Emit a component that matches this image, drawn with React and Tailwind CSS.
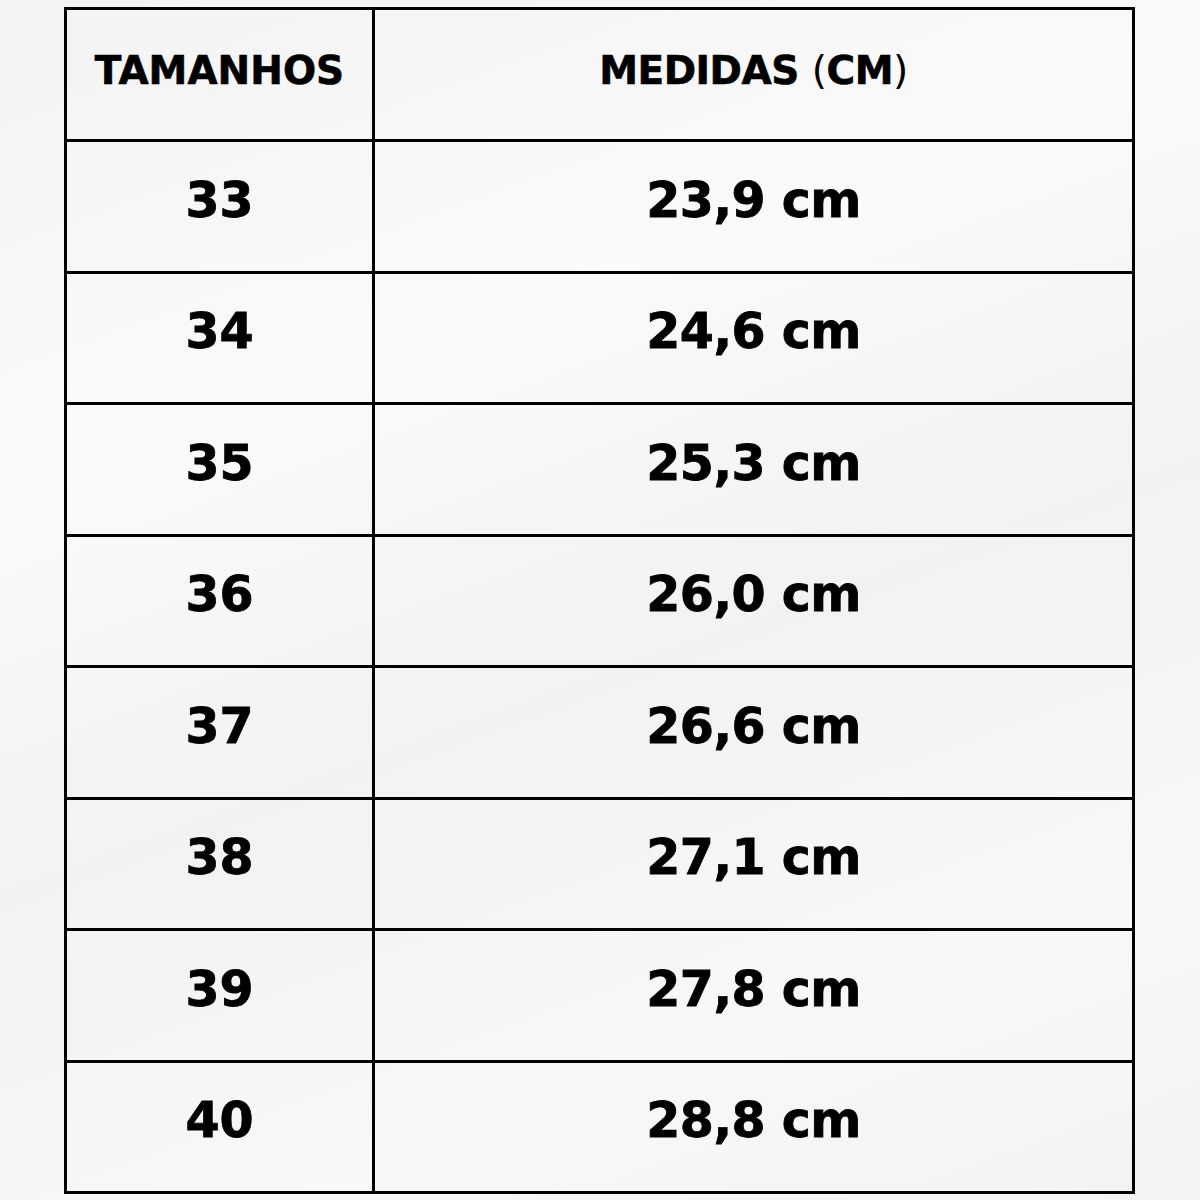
import React from 'react';

const rows = [
  ['33', '23,9 cm'],
  ['34', '24,6 cm'],
  ['35', '25,3 cm'],
  ['36', '26,0 cm'],
  ['37', '26,6 cm'],
  ['38', '27,1 cm'],
  ['39', '27,8 cm'],
  ['40', '28,8 cm'],
];

export default function App() {
  return (
    <div className="w-[1200px] h-[1200px] bg-[#f5f5f5] bg-[linear-gradient(160deg,#f3f3f3_0%,#fafafa_30%,#f2f2f2_55%,#f8f8f8_80%,#f3f3f3_100%)] pt-[7px] pl-[64px] font-['DejaVu_Sans',sans-serif] text-black">
      <div className="w-[1071px] border-[3px] border-black flex flex-col">
        {/* header */}
        <div className="flex h-[129px]">
          <div className="w-[308px] border-r-[3px] border-black flex items-center justify-center pb-[6px]">
            <span className="text-[39px] font-bold tracking-[0px] [-webkit-text-stroke:0.6px_black]">TAMANHOS</span>
          </div>
          <div className="flex-1 flex items-center justify-center pb-[6px]">
            <span className="text-[39px] font-bold tracking-[-0.5px] [-webkit-text-stroke:0.6px_black]">
              MEDIDAS <span className="font-normal [-webkit-text-stroke:0px]">(</span>CM<span className="font-normal [-webkit-text-stroke:0px]">)</span>
            </span>
          </div>
        </div>

        {rows.map(([size, cm]) => (
          <div key={size} className="flex h-[131.5px] border-t-[3px] border-black">
            <div className="w-[308px] border-r-[3px] border-black flex items-center justify-center pb-[12px]">
              <span className="text-[49px] font-bold [-webkit-text-stroke:0.8px_black]">{size}</span>
            </div>
            <div className="flex-1 flex items-center justify-center pb-[12px]">
              <span className="text-[49px] font-bold tracking-[-0.5px] [-webkit-text-stroke:0.8px_black]">{cm}</span>
            </div>
          </div>
        ))}
      </div>
    </div>
  );
}
